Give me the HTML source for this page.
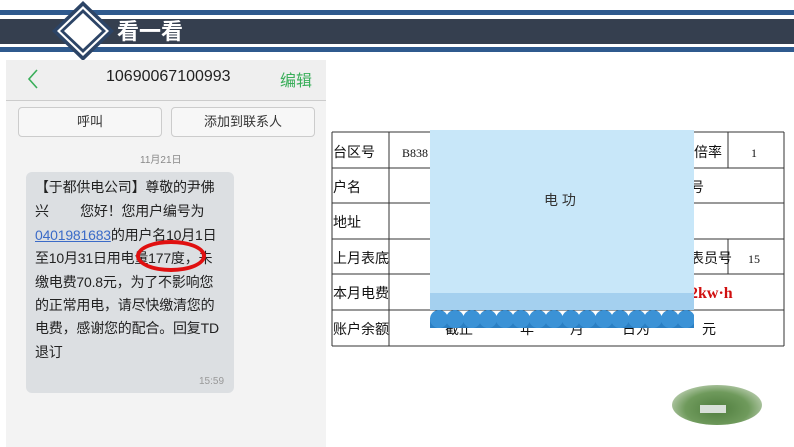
<!DOCTYPE html>
<html><head><meta charset="utf-8"><style>
body{margin:0;width:794px;height:447px;position:relative;overflow:hidden;background:#fff;font-family:"Liberation Sans","Noto Sans CJK SC",sans-serif}
.a{position:absolute}
.ln{position:absolute;left:35px;font-size:14px;color:#222;white-space:nowrap;letter-spacing:-0.2px}
</style></head><body>
<div class="a" style="left:0;top:10px;width:794px;height:5px;background:#2f5a8e"></div>
<div class="a" style="left:0;top:19px;width:794px;height:25px;background:#353f4f"></div>
<div class="a" style="left:0;top:47px;width:794px;height:5px;background:#2f5a8e"></div>
<svg class="a" style="left:50px;top:0" width="66" height="62" viewBox="0 0 66 62">
<polygon points="33,1 64,31 33,61 2,31" fill="#2c4466"/>
<polygon points="33,6 59,31 33,56 7,31" fill="#fff"/>
<polygon points="33,9 56,31 33,53 10,31" fill="#2c4466"/>
<polygon points="33,13 52,31 33,49 14,31" fill="#fff"/>
</svg>
<div class="a" style="left:117px;top:20px;font-size:22px;font-weight:bold;color:#fff;line-height:24px">看一看</div>

<div class="a" style="left:6px;top:60px;width:320px;height:387px;background:#f3f3f3"></div>
<div class="a" style="left:6px;top:60px;width:320px;height:40px;background:#efefef;border-bottom:1px solid #ccc"></div>
<svg class="a" style="left:26px;top:68px" width="14" height="22"><polyline points="11,2 3,11 11,20" fill="none" stroke="#3aae5a" stroke-width="1.6"/></svg>
<div class="a" style="left:106px;top:68px;font-size:16px;color:#222">10690067100993</div>
<div class="a" style="left:280px;top:67px;font-size:16px;color:#3aae5a">编辑</div>
<div class="a" style="left:18px;top:107px;width:142px;height:28px;border:1px solid #ccc;border-radius:4px;background:#f7f7f7;text-align:center;line-height:28px;font-size:13px;color:#333">呼叫</div>
<div class="a" style="left:171px;top:107px;width:142px;height:28px;border:1px solid #ccc;border-radius:4px;background:#f7f7f7;text-align:center;line-height:28px;font-size:13px;color:#333">添加到联系人</div>
<div class="a" style="left:140px;top:151px;font-size:10px;color:#888">11月21日</div>
<div class="a" style="left:26px;top:172px;width:208px;height:221px;background:#dcdfe2;border-radius:6px"></div>
<div class="ln" style="top:177px">【于都供电公司】尊敬的尹佛</div>
<div class="ln" style="top:201px">兴　　 您好！您用户编号为</div>
<div class="ln" style="top:225px"><span style="color:#3b6bc8;text-decoration:underline">0401981683</span>的用户名10月1日</div>
<div class="ln" style="top:248px">至10月31日用电量177度，未</div>
<div class="ln" style="top:272px">缴电费70.8元，为了不影响您</div>
<div class="ln" style="top:295px">的正常用电，请尽快缴清您的</div>
<div class="ln" style="top:318px">电费，感谢您的配合。回复TD</div>
<div class="ln" style="top:342px">退订</div>
<div class="a" style="left:199px;top:376px;font-size:10px;color:#999">15:59</div>
<div class="a" style="left:136px;top:240px;width:70px;height:32px;border:4px solid #e01010;border-radius:50%;box-sizing:border-box"></div>

<svg class="a" style="left:330px;top:130px" width="464" height="220">
<g stroke="#333" stroke-width="1" fill="none">
<line x1="2" y1="2" x2="454" y2="2"/><line x1="2" y1="38" x2="454" y2="38"/><line x1="2" y1="73" x2="454" y2="73"/><line x1="2" y1="109" x2="454" y2="109"/><line x1="2" y1="144" x2="454" y2="144"/><line x1="2" y1="180" x2="454" y2="180"/><line x1="2" y1="216" x2="454" y2="216"/>
<line x1="2" y1="2" x2="2" y2="216"/><line x1="59" y1="2" x2="59" y2="216"/><line x1="398" y1="2" x2="398" y2="38"/><line x1="398" y1="109" x2="398" y2="144"/><line x1="454" y1="2" x2="454" y2="216"/>
</g>
<g font-size="14" fill="#111" font-family="Liberation Sans,Noto Sans CJK SC,sans-serif">
<text x="3" y="27">台区号</text><text x="3" y="62">户名</text><text x="3" y="97">地址</text><text x="3" y="133">上月表底</text><text x="3" y="168">本月电费</text><text x="3" y="204">账户余额</text>
<text x="72" y="27" font-size="12" font-family="Liberation Serif,serif">B838</text><text x="364" y="27">倍率</text><text x="421" y="27" font-size="12" font-family="Liberation Serif,serif">1</text>
<text x="360" y="62">号</text><text x="360" y="133">表员号</text><text x="418" y="133" font-size="12" font-family="Liberation Serif,serif">15</text>
<text x="360" y="168" fill="#d01010" font-weight="bold" font-size="16" font-family="Liberation Serif,serif">2kw·h</text>
<text x="115" y="204">截止</text><text x="190" y="204">年</text><text x="240" y="204">月</text><text x="292" y="204">日为</text><text x="372" y="204">元</text>
</g>
</svg>
<div class="a" style="left:430px;top:130px;width:264px;height:163px;background:#c8e7f9"></div>
<div class="a" style="left:430px;top:293px;width:264px;height:17px;background:#a4d0ef"></div>
<svg class="a" style="left:430px;top:308px" width="264" height="20">
<rect x="0" y="10" width="264" height="10" fill="#2b7fc3"/>
<g fill="#3b92d6"><circle cx="9" cy="11" r="9"/><circle cx="25" cy="11" r="9"/><circle cx="42" cy="11" r="9"/><circle cx="58" cy="11" r="9"/><circle cx="75" cy="11" r="9"/><circle cx="91" cy="11" r="9"/><circle cx="108" cy="11" r="9"/><circle cx="124" cy="11" r="9"/><circle cx="141" cy="11" r="9"/><circle cx="157" cy="11" r="9"/><circle cx="174" cy="11" r="9"/><circle cx="190" cy="11" r="9"/><circle cx="207" cy="11" r="9"/><circle cx="223" cy="11" r="9"/><circle cx="240" cy="11" r="9"/><circle cx="256" cy="11" r="9"/></g>
</svg>
<div class="a" style="left:544px;top:190px;font-size:14px;color:#333">电 功</div>

<div class="a" style="left:672px;top:385px;width:90px;height:40px;border-radius:50%;background:radial-gradient(ellipse at 50% 60%,#4f7d3e 0%,#6f9a5c 50%,#c9d8c0 85%,#fff 100%)"></div>
<div class="a" style="left:700px;top:405px;width:26px;height:8px;background:#d8e0d8"></div>
</body></html>
